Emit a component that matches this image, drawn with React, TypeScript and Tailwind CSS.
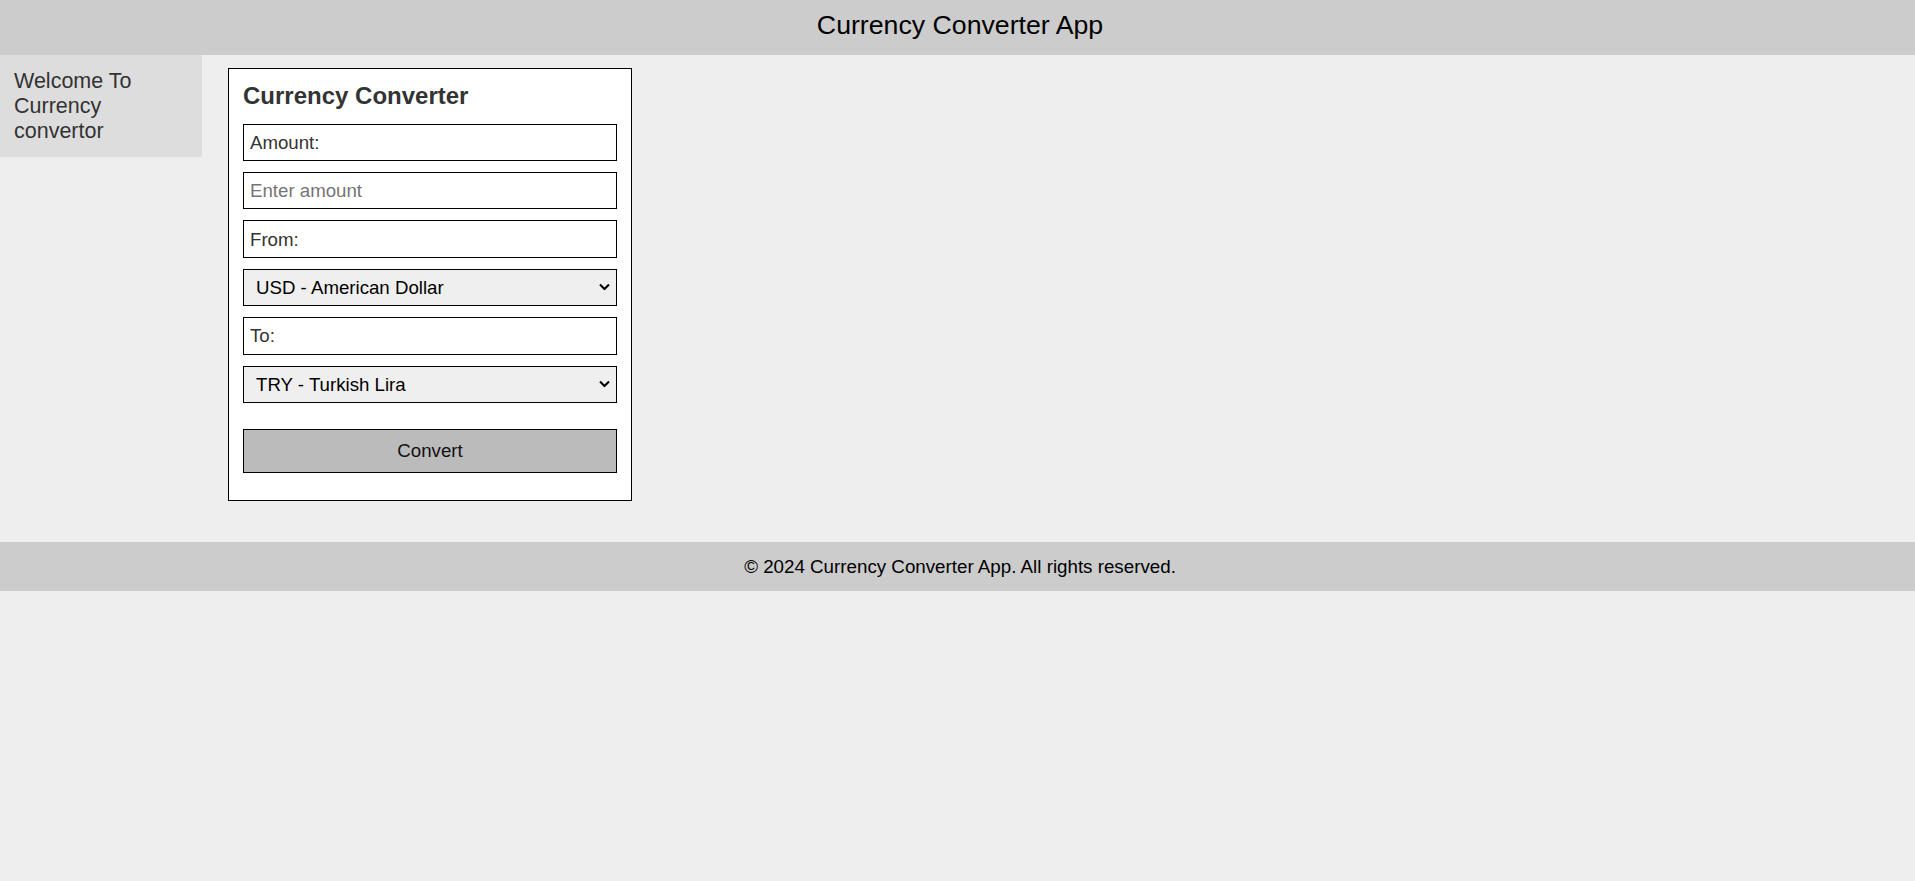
import { useState } from "react";

const currencies = [
  { code: "USD", name: "American Dollar" },
  { code: "EUR", name: "Euro" },
  { code: "GBP", name: "British Pound" },
  { code: "TRY", name: "Turkish Lira" },
];

function CurrencySelect({ value, onChange }: { value: string; onChange: (v: string) => void }) {
  return (
    <div className="relative h-[37.4px]">
      <select
        value={value}
        onChange={(e) => onChange(e.target.value)}
        className="h-full w-full appearance-none border border-black bg-[#efefef] pl-[12px] pr-[24px] pt-[2px] text-[18.67px] text-black outline-none"
      >
        {currencies.map((c) => (
          <option key={c.code} value={c.code}>
            {c.code} - {c.name}
          </option>
        ))}
      </select>
      {/* dropdown chevron */}
      <svg
        className="pointer-events-none absolute right-[7px] top-1/2 -translate-y-1/2"
        width="11"
        height="7"
        viewBox="0 0 11 7"
        fill="none"
      >
        <polyline points="1,1 5.5,5.5 10,1" stroke="#000" strokeWidth="2.1" />
      </svg>
    </div>
  );
}

export default function App() {
  const [amount, setAmount] = useState("");
  const [from, setFrom] = useState("USD");
  const [to, setTo] = useState("TRY");

  return (
    <div className="min-h-screen bg-[#eeeeee] font-['Liberation_Sans',Arial,sans-serif]">
      <header className="flex h-[55px] items-center justify-center bg-[#cccccc] pl-[5px] pb-[5px] text-[26.7px] text-black">
        Currency Converter App
      </header>

      <main className="flex items-start">
        <aside className="w-[202px] bg-[#dddddd] pt-[13.5px] pb-[12.5px] pl-[14px] pr-[14px] text-[21.5px] leading-[25.3px] text-[#333333]">
          Welcome To Currency convertor
        </aside>

        <section className="pl-[26px] pt-[13px] pb-[41px]">
          <form
            onSubmit={(e) => e.preventDefault()}
            className="w-[404px] border border-black bg-white px-[14px] pt-[13px] pb-[27px]"
          >
            <h2 className="mb-[14px] text-[24px] font-bold leading-[27.6px] text-[#333333]">
              Currency Converter
            </h2>

            <div className="flex flex-col gap-[11px]">
              <label className="flex h-[37.4px] items-center border border-black px-[6px] pt-[1px] text-[18.67px] text-[#333333]">
                Amount:
              </label>
              <input
                type="number"
                value={amount}
                onChange={(e) => setAmount(e.target.value)}
                placeholder="Enter amount"
                className="h-[37.4px] border border-black bg-white px-[6px] text-[18.67px] text-[#333333] placeholder:text-[#757575] outline-none"
              />
              <label className="flex h-[37.4px] items-center border border-black px-[6px] pt-[1px] text-[18.67px] text-[#333333]">
                From:
              </label>
              <CurrencySelect value={from} onChange={setFrom} />
              <label className="flex h-[37.4px] items-center border border-black px-[6px] pt-[1px] text-[18.67px] text-[#333333]">
                To:
              </label>
              <CurrencySelect value={to} onChange={setTo} />
            </div>

            <button
              type="submit"
              className="mt-[25.6px] h-[44px] w-full border border-black bg-[#bbbbbb] text-[18.67px] text-[#111111]"
            >
              Convert
            </button>
          </form>
        </section>
      </main>

      <footer className="flex h-[49px] items-center justify-center bg-[#cccccc] pl-[5px] pt-[2px] text-[18.75px] text-black">
        © 2024 Currency Converter App. All rights reserved.
      </footer>
    </div>
  );
}
